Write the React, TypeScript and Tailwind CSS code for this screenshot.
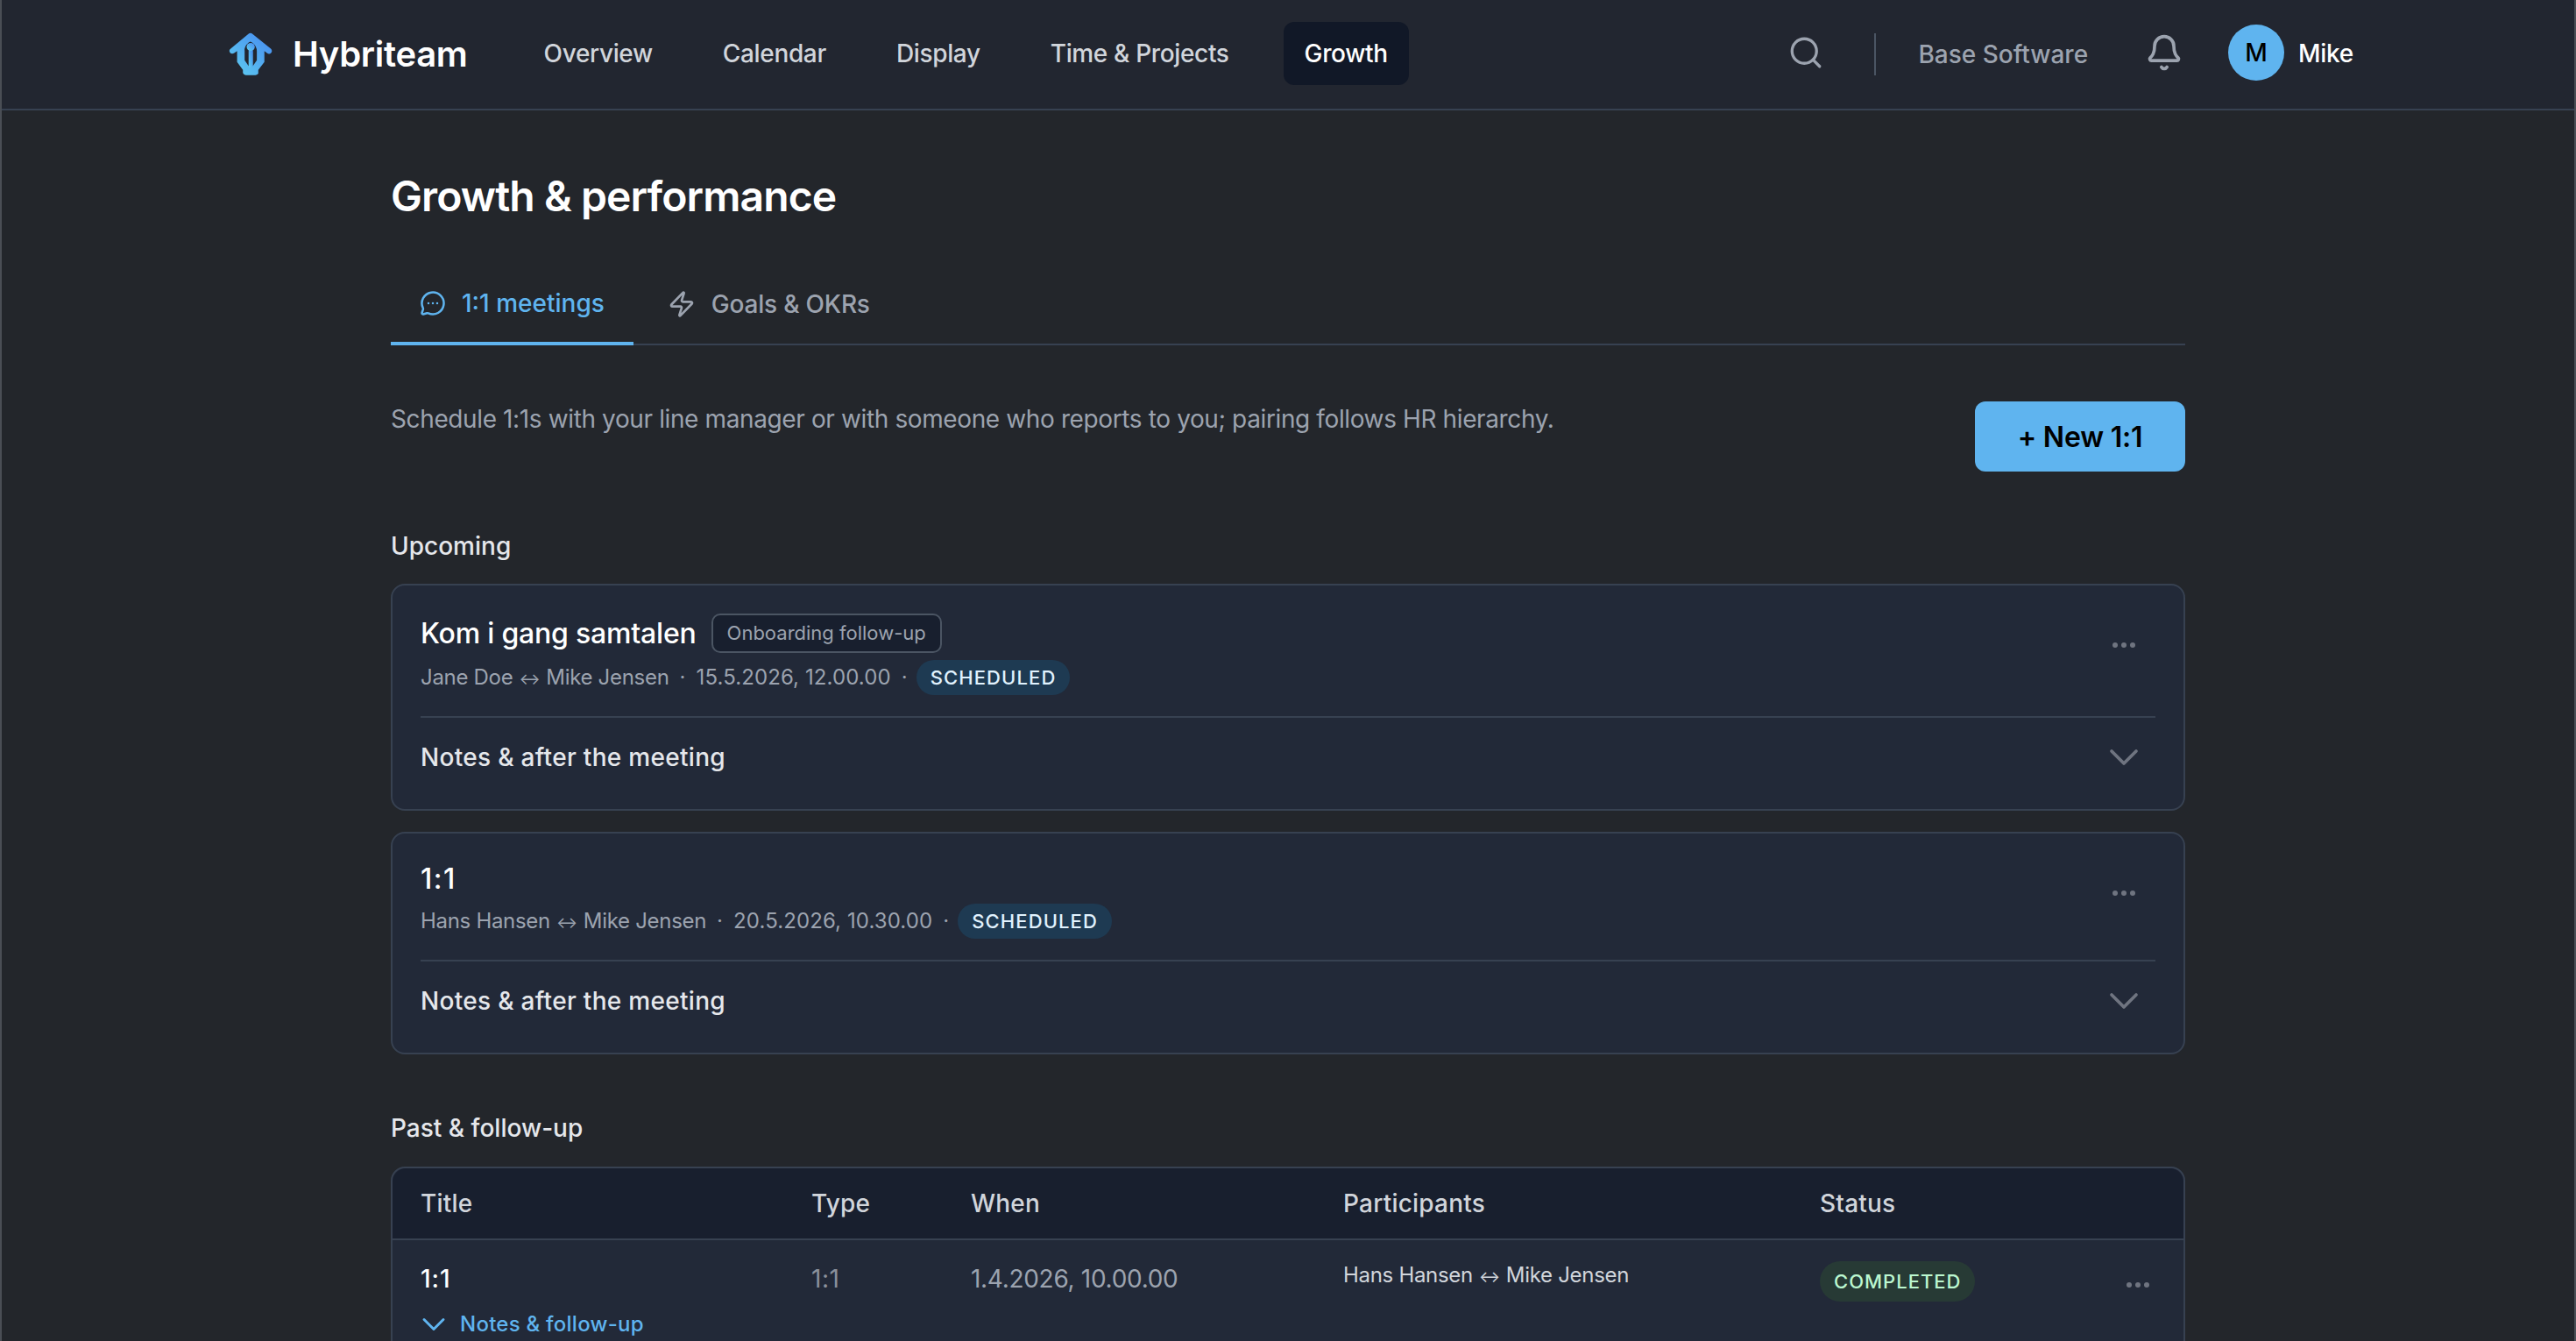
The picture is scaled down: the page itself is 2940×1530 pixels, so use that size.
import { Bell, ChevronDown, MessageCircleMore, Search, Zap } from "lucide-react";

const navItems = ["Overview", "Calendar", "Display", "Time & Projects", "Growth"];

function Logo() {
  return (
    <svg width="53" height="53" viewBox="60 45 160 160" fill="none">
      <defs>
        <linearGradient id="logoGrad" x1="1" y1="0" x2="0" y2="1">
          <stop offset="0" stopColor="#4688f0" />
          <stop offset="1" stopColor="#5fd0f0" />
        </linearGradient>
      </defs>
      <path
        d="M138 50 Q142 50 146 54 L208 104 Q216 112 208 120 Q202 124 195 119 L186 112 V150 L165 177 V190 Q160 195 155 195 H122 Q115 195 112 188 V177 L92 150 V112 L82 119 Q74 124 68 118 Q62 110 70 104 L130 54 Q134 50 138 50 Z"
        fill="url(#logoGrad)"
      />
      <path d="M118 112 Q116 96 132 83 L138 80 L146 84 Q160 96 160 112 V144 L146 164 V112 H132 V164 L118 144 Z" fill="#222630" />
      <path d="M132 108 V168 H146 V108 Z" fill="url(#logoGrad)" />
      <circle cx="139" cy="98" r="14" fill="url(#logoGrad)" />
    </svg>
  );
}

function Dots() {
  return (
    <svg width="28" height="8" viewBox="0 0 28 8" fill="#6f7480">
      <circle cx="4" cy="4" r="3" />
      <circle cx="14" cy="4" r="3" />
      <circle cx="24" cy="4" r="3" />
    </svg>
  );
}

function Pair({ left, right }: { left: string; right: string }) {
  return (
    <span className="tracking-[-0.3px]">
      {left}
      <span className="mx-[7px] text-[18px]">↔</span>
      {right}
    </span>
  );
}

function Header() {
  return (
    <header className="flex h-[126px] items-center border-b-2 border-[#374151] bg-[#222630] pl-[258px] pr-[252px]">
      <Logo />
      <span className="ml-[21px] text-[40px] font-semibold tracking-[-0.3px] text-white">Hybriteam</span>
      <nav className="-mt-[3px] ml-[63px] flex items-center gap-8">
        {navItems.map((item) => (
          <a
            key={item}
            className={
              item === "Growth"
                ? "ml-[6px] flex h-[72px] items-center rounded-xl bg-[#111827] px-6 text-[28px] font-medium tracking-[-0.35px] text-white"
                : "flex h-[72px] items-center rounded-xl px-6 text-[28px] font-medium tracking-[-0.35px] text-[#d1d5db]"
            }
          >
            {item}
          </a>
        ))}
      </nav>
      <div className="ml-auto flex items-center">
        <Search size={42} strokeWidth={1.9} className="-mt-1 text-[#9ca3af]" />
        <div className="ml-[57px] h-[48px] w-[2px] bg-[#4b5563]" />
        <span className="ml-[48px] text-[28px] font-medium text-[#9ca3af]">Base Software</span>
        <Bell size={44} strokeWidth={2} className="-mt-1 ml-[65px] text-[#9ca3af]" />
        <div className="-mt-1 ml-[51px] flex h-16 w-16 items-center justify-center rounded-full bg-[#5fb4ef] text-[28px] font-medium text-black">
          M
        </div>
        <span className="-mt-[3px] ml-4 text-[28px] font-medium tracking-[-0.3px] text-white">Mike</span>
      </div>
    </header>
  );
}

function Tabs() {
  return (
    <div className="mt-[42px] flex h-[96px] border-b-2 border-[#374151]">
      <div className="-mb-[2px] flex items-center gap-[18px] border-b-4 border-[#5fb4ef] px-[33px] pt-1 text-[28px] font-medium text-[#5fb4ef]">
        <MessageCircleMore size={30} strokeWidth={2} />
        1:1 meetings
      </div>
      <div className="flex items-center gap-[18px] px-[39px] pt-1 text-[28px] font-medium tracking-[-0.2px] text-[#9ca3af]">
        <Zap size={32} strokeWidth={2} />
        Goals &amp; OKRs
      </div>
    </div>
  );
}

function StatusPill({ label }: { label: string }) {
  return (
    <span className="flex h-10 items-center rounded-full bg-[#1e3a52] px-4 text-[22px] font-medium tracking-[1.1px] text-[#e0f2fe]">
      {label}
    </span>
  );
}

type Meeting = {
  title: string;
  tag?: string;
  left: string;
  right: string;
  when: string;
};

function MeetingCard({ meeting }: { meeting: Meeting }) {
  return (
    <div className="rounded-2xl border-2 border-[#374151] bg-[#222938] px-8">
      <div className="flex items-start justify-between pt-8">
        <div>
          <div className="flex min-h-10 items-center gap-[17px]">
            <span className={meeting.tag ? "text-[32px] leading-10 font-medium tracking-[-0.2px] text-white" : "text-[32px] leading-10 font-medium tracking-[1.5px] text-white"}>
              {meeting.title}
            </span>
            {meeting.tag && (
              <span className="flex h-[45px] items-center rounded-[10px] border-2 border-[#4b5563] bg-[#181f2e] px-4 text-[22px] text-[#9ca3af]">
                {meeting.tag}
              </span>
            )}
          </div>
          <div className="mt-2 flex h-10 items-center text-[24px] tracking-[0.1px] text-[#9ca3af]">
            <Pair left={meeting.left} right={meeting.right} />
            <span className="mx-3">·</span>
            {meeting.when}
            <span className="ml-3 mr-[10px]">·</span>
            <StatusPill label="SCHEDULED" />
          </div>
        </div>
        <div className="mr-[22px] mt-[32px] flex">
          <Dots />
        </div>
      </div>
      <div className="mt-6 flex h-[106px] items-center justify-between border-t-2 border-[#374151] pb-[14px] pr-[22px]">
        <span className="text-[28px] font-medium tracking-[0.3px] text-[#e5e7eb]">Notes &amp; after the meeting</span>
        <ChevronDown size={56} strokeWidth={1.6} className="-mr-[14px] text-[#6f7480]" />
      </div>
    </div>
  );
}

function PastTable() {
  return (
    <div className="mt-[24px] rounded-2xl border-2 border-[#374151] bg-[#222938]">
      <div className="grid h-[82px] grid-cols-[446px_182px_425px_544px_1fr] items-center rounded-t-2xl border-b-2 border-[#374151] bg-[#181f2e] pl-8 text-[28px] font-medium tracking-[0.2px] text-[#d1d5db]">
        <span>Title</span>
        <span>Type</span>
        <span>When</span>
        <span>Participants</span>
        <span>Status</span>
      </div>
      <div className="grid h-[200px] grid-cols-[446px_182px_425px_544px_1fr] pl-8 pt-[24px]">
        <div>
          <div className="flex h-10 items-center text-[28px] font-medium tracking-[1px] text-white">1:1</div>
          <div className="-ml-[7px] mt-[10px] flex items-center gap-2 text-[24px] font-medium tracking-[0.25px] text-[#5fb4ef]">
            <ChevronDown size={44} strokeWidth={1.6} />
            Notes &amp; follow-up
          </div>
        </div>
        <div className="flex h-10 items-center text-[28px] tracking-[0.5px] text-[#8a909b]">1:1</div>
        <div className="flex h-10 items-center text-[28px] tracking-[-0.3px] text-[#9ca3af]">1.4.2026, 10.00.00</div>
        <div className="flex h-8 items-center text-[24px] tracking-[0.2px] text-[#d1d5db]">
          <Pair left="Hans Hansen" right="Mike Jensen" />
        </div>
        <div className="flex items-start justify-between pr-[38px]">
          <span className="flex h-[46px] items-center rounded-full bg-[#273a35] px-4 text-[22px] font-medium tracking-[1px] text-[#bbf7d0]">
            COMPLETED
          </span>
          <div className="mt-[23px] flex">
            <Dots />
          </div>
        </div>
      </div>
    </div>
  );
}

export default function App() {
  return (
    <div className="h-[1530px] overflow-hidden border-x-2 border-[#4a4e55] bg-[#23262b] font-['Inter',sans-serif]">
      <Header />
      <main className="mx-auto w-[2048px] pt-[66px]">
        <h1 className="text-[48px] leading-[64px] font-semibold tracking-[-0.9px] text-white">Growth &amp; performance</h1>
        <Tabs />

        <div className="mt-[64px] flex items-start justify-between">
          <p className="text-[28px] leading-[40px] tracking-[-0.38px] text-[#9ca3af]">
            Schedule 1:1s with your line manager or with someone who reports to you; pairing follows HR hierarchy.
          </p>
          <button className="h-[80px] w-[240px] rounded-xl bg-[#5fb4ef] pt-[2px] text-[32px] font-semibold tracking-[-0.2px] text-black">
            + New 1:1
          </button>
        </div>

        <h2 className="mt-[65px] text-[28px] leading-[40px] font-medium text-[#e5e7eb]">Upcoming</h2>
        <div className="mt-[23px] flex flex-col gap-[24px]">
          <MeetingCard
            meeting={{
              title: "Kom i gang samtalen",
              tag: "Onboarding follow-up",
              left: "Jane Doe",
              right: "Mike Jensen",
              when: "15.5.2026, 12.00.00",
            }}
          />
          <MeetingCard
            meeting={{
              title: "1:1",
              left: "Hans Hansen",
              right: "Mike Jensen",
              when: "20.5.2026, 10.30.00",
            }}
          />
        </div>

        <h2 className="mt-[64px] text-[28px] leading-[40px] font-medium text-[#e5e7eb]">Past &amp; follow-up</h2>
        <PastTable />
      </main>
    </div>
  );
}
